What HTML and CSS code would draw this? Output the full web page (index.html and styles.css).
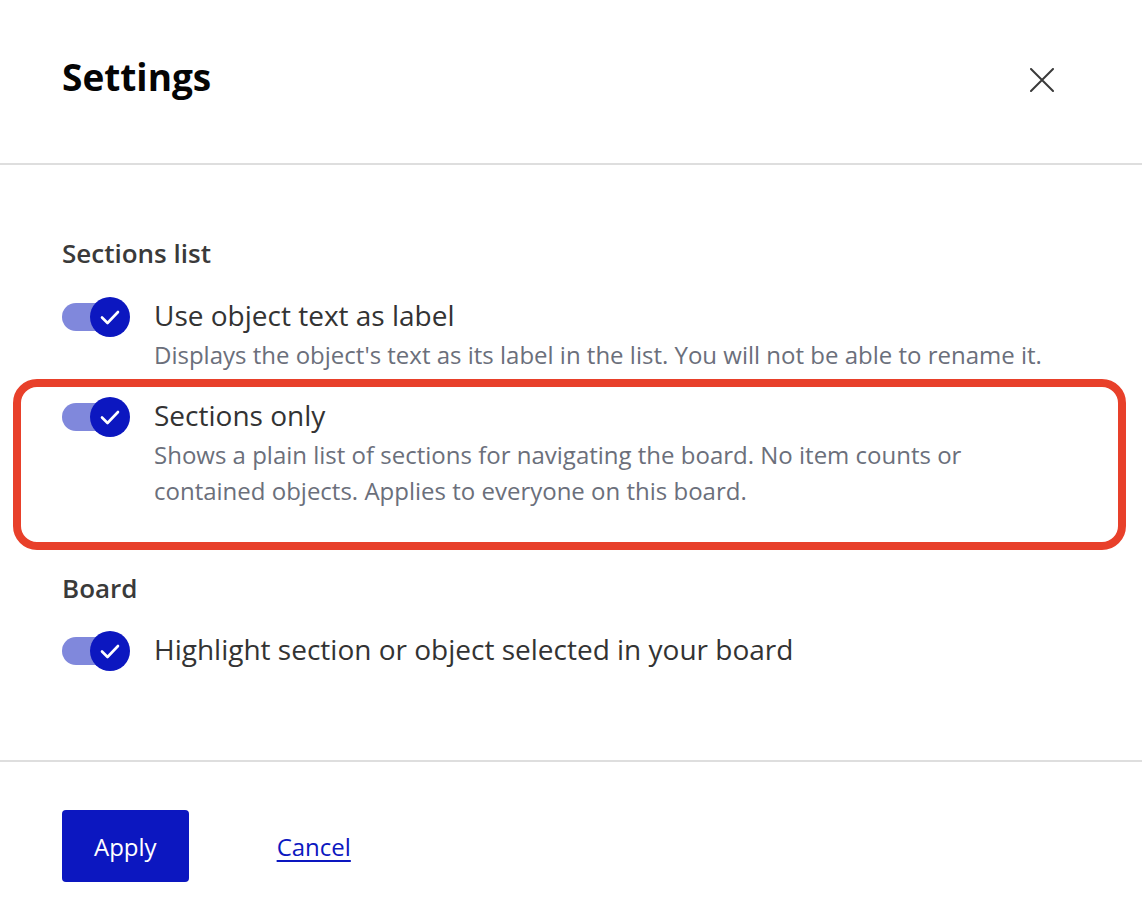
FILE: index.html
```html
<!DOCTYPE html>
<html lang="en">
<head>
<meta charset="utf-8">
<title>Settings</title>
<link rel="stylesheet" href="styles.css">
</head>
<body>
<div class="dialog">
  <header class="dialog-header">
    <h1 class="dialog-title">Settings</h1>
    <button class="close-btn" aria-label="Close">
      <svg width="24" height="24" viewBox="0 0 24 24" aria-hidden="true">
        <path d="M1 1 L23 23 M23 1 L1 23" stroke="#3a3a3a" stroke-width="2" stroke-linecap="round" fill="none"/>
      </svg>
    </button>
  </header>

  <main class="dialog-body">
    <h2 class="group-title">Sections list</h2>
    <div class="option">
      <span class="toggle"><span class="track"></span><span class="knob"><svg width="40" height="40" viewBox="0 0 40 40" aria-hidden="true"><path d="M12 20.5 L17.5 26 L28 15" stroke="#fff" stroke-width="2.6" stroke-linecap="round" stroke-linejoin="round" fill="none"/></svg></span></span>
      <div class="option-text">
        <div class="option-label">Use object text as label</div>
        <div class="option-desc">Displays the object's text as its label in the list. You will not be able to rename it.</div>
      </div>
    </div>
    <div class="option option-marked">
      <span class="toggle"><span class="track"></span><span class="knob"><svg width="40" height="40" viewBox="0 0 40 40" aria-hidden="true"><path d="M12 20.5 L17.5 26 L28 15" stroke="#fff" stroke-width="2.6" stroke-linecap="round" stroke-linejoin="round" fill="none"/></svg></span></span>
      <div class="option-text">
        <div class="option-label">Sections only</div>
        <div class="option-desc">Shows a plain list of sections for navigating the board. No item counts or contained objects. Applies to everyone on this board.</div>
      </div>
    </div>

    <h2 class="group-title board-title">Board</h2>
    <div class="option option-last">
      <span class="toggle"><span class="track"></span><span class="knob"><svg width="40" height="40" viewBox="0 0 40 40" aria-hidden="true"><path d="M12 20.5 L17.5 26 L28 15" stroke="#fff" stroke-width="2.6" stroke-linecap="round" stroke-linejoin="round" fill="none"/></svg></span></span>
      <div class="option-text">
        <div class="option-label">Highlight section or object selected in your board</div>
      </div>
    </div>
  </main>

  <footer class="dialog-footer">
    <button class="btn-apply">Apply</button>
    <a class="link-cancel" href="#">Cancel</a>
  </footer>
</div>
</body>
</html>
```

FILE: styles.css
```css
* { box-sizing: border-box; }

html, body {
  margin: 0;
  padding: 0;
  background: #ffffff;
}

body {
  font-family: "Open Sans", "Noto Sans", "Liberation Sans", sans-serif;
  color: #333333;
  width: 1142px;
  height: 924px;
  overflow: hidden;
}

.dialog {
  width: 1142px;
}

.dialog-header {
  display: flex;
  justify-content: space-between;
  align-items: flex-start;
  height: 165px;
  padding: 55px 88px 0 62px;
  border-bottom: 2px solid #dedede;
}

.dialog-title {
  margin: 0;
  font-size: 37px;
  line-height: 44px;
  font-weight: 700;
  color: #050505;
}

.close-btn {
  margin-top: 13px;
  padding: 0;
  border: 0;
  background: none;
  width: 24px;
  height: 24px;
  display: block;
}

.close-btn svg { display: block; }

.dialog-body {
  padding: 72px 62px 89px 62px;
}

.group-title {
  margin: 0;
  font-size: 26px;
  line-height: 32px;
  font-weight: 600;
  color: #3a3a3a;
}

.board-title {
  margin-top: 63px;
}

.option {
  display: flex;
  align-items: flex-start;
  gap: 24px;
  margin-top: 28px;
}

.option + .option {
  margin-top: 24px;
}

.option-last {
  margin-top: 27px;
}

.option-marked {
  position: relative;
}

.option-marked::after {
  content: "";
  position: absolute;
  left: -49px;
  top: -18px;
  right: -46px;
  bottom: -41px;
  border: 8px solid #e8402a;
  border-radius: 24px;
  pointer-events: none;
}

.toggle {
  position: relative;
  flex: 0 0 68px;
  width: 68px;
  height: 40px;
  display: block;
}

.track {
  position: absolute;
  left: 0;
  top: 6px;
  width: 60px;
  height: 28px;
  border-radius: 14px;
  background: #8088dc;
}

.knob {
  position: absolute;
  right: 0;
  top: 0;
  width: 40px;
  height: 40px;
  border-radius: 50%;
  background: #0c17c0;
}

.knob svg { display: block; }

.option-text {
  flex: 1;
  max-width: 900px;
}

.option-label {
  font-size: 28px;
  line-height: 36px;
  color: #333333;
}

.option-desc {
  margin-top: 4px;
  font-size: 24px;
  line-height: 36px;
  color: #6b6f7b;
}

.dialog-footer {
  display: flex;
  align-items: center;
  gap: 88px;
  padding: 48px 62px 0 62px;
  border-top: 2px solid #dedede;
}

.btn-apply {
  height: 72px;
  padding: 0 32px;
  border: 0;
  border-radius: 4px;
  background: #0c17c0;
  color: #ffffff;
  font-family: "Open Sans", "Noto Sans", "Liberation Sans", sans-serif;
  font-size: 24px;
}

.link-cancel {
  font-size: 24px;
  color: #0c17c0;
  text-decoration: underline;
  text-underline-offset: 4px;
}
```
